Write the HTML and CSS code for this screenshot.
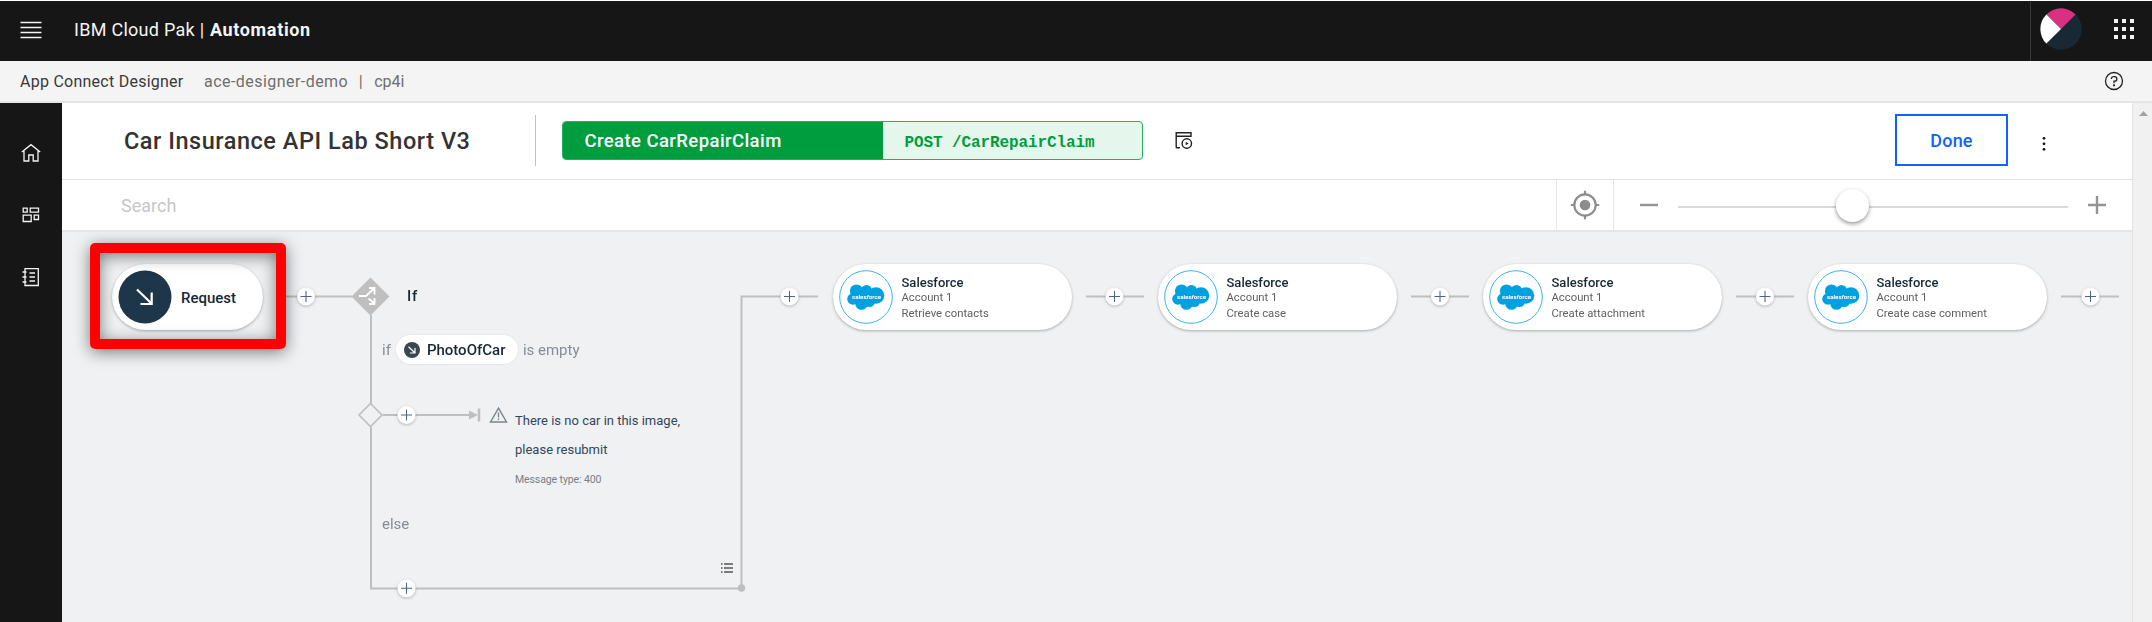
FILE: index.html
```html
<!DOCTYPE html>
<html lang="en">
<head>
<meta charset="utf-8">
<title>App Connect Designer</title>
<link rel="stylesheet" href="styles.css">
</head>
<body>
<svg class="defs" aria-hidden="true">
  <symbol id="plus" viewBox="0 0 24 24"><circle cx="12" cy="12" r="9" fill="#fff"/><path d="M12 6.500v11M6.500 12h11" stroke="#50658a" stroke-width="1.100"/></symbol>
  <symbol id="cloud" viewBox="0 0 54 54">
    <circle cx="27" cy="27" r="26.300" fill="#fff" stroke="#3bb3ea" stroke-width="1"/>
    <g fill="#00a1e0"><circle cx="17.500" cy="21" r="6.600"/><circle cx="27.500" cy="20.500" r="5.500"/><circle cx="37" cy="25.500" r="8.300"/><circle cx="14" cy="29" r="5.800"/><circle cx="22.500" cy="33.500" r="6.300"/><circle cx="30.500" cy="31.500" r="5.500"/><path d="M14 22h24v10H16z"/></g>
  </symbol>
</svg>
<header class="topbar">
  <svg class="menu" width="22" height="18" viewBox="0 0 22 18"><path d="M.5 1.500h21M.5 6.500h21M.5 11.500h21M.5 16.500h21" stroke="#f4f4f4" stroke-width="1.400"/></svg>
  <span class="brand">IBM Cloud Pak |</span><span class="brand-strong">Automation</span>
  <div class="user">
    <svg width="42" height="42" viewBox="0 0 42 42"><circle cx="21" cy="21" r="20.700" fill="#182935"/><path d="M21 21L6.400 6.400A20.700 20.700 0 0 1 35.600 6.400Z" fill="#da3080"/><path d="M21 21L6.400 6.400A20.700 20.700 0 0 0 6.400 35.600Z" fill="#fff"/></svg>
    <svg class="apps" width="20" height="20" viewBox="0 0 20 20"><path d="M0 2h4m4 0h4m4 0h4M0 10h4m4 0h4m4 0h4M0 18h4m4 0h4m4 0h4" stroke="#f4f4f4" stroke-width="4"/></svg>
  </div>
</header>
<div class="subbar">
  <span class="product">App Connect Designer</span><span class="instance">ace-designer-demo</span><span class="pipe">|</span><span class="ns">cp4i</span>
  <svg class="help" width="20" height="20" viewBox="0 0 20 20" fill="none" stroke="#222" stroke-width="1.300"><circle cx="10" cy="10" r="8.500"/><path d="M7.400 8V7.600A2 2 0 0 1 9.400 5.700h1.200a2 2 0 0 1 0 4.500H10v2"/><circle cx="10" cy="14.300" r=".5" fill="#222"/></svg>
</div>
<div class="body">
  <nav class="side">
    <svg width="20" height="20" viewBox="0 0 20 20" fill="none" stroke="#f4f4f4" stroke-width="1.300"><path d="M.8 9L10 1.700 19.200 9M3 7.500V18h4.800v-6h4.400v6H17V7.500"/></svg>
    <svg width="20" height="20" viewBox="0 0 20 20" fill="none" stroke="#f4f4f4" stroke-width="1.300"><path d="M2.200 3.200h4v4h-4zM9.200 3.200h8.300v4H9.200zM2.200 10.200h8v6.300h-8zM13.200 10.200h4.300v4.300h-4.300z"/></svg>
    <svg width="20" height="20" viewBox="0 0 20 20" fill="none" stroke="#f4f4f4" stroke-width="1.300"><path d="M4 1.700h13.300v16.800H4zM1.500 5h4M1.500 10h4M1.500 15h4M8.500 6h5.500M8.500 10h5.500M8.500 14h5.500"/></svg>
  </nav>
  <main class="main">
    <div class="titlebar">
      <h1 class="title">Car Insurance API Lab Short V3</h1>
      <div class="op"><span class="op-name">Create CarRepairClaim</span><code class="op-path">POST /CarRepairClaim</code></div>
      <svg class="run" width="18" height="19" viewBox="0 0 18 19" fill="none" stroke="#222" stroke-width="1.400"><path d="M5 16.800H2Q1.200 16.800 1.200 16V1.800H16V5.200H1.200"/><circle cx="11.800" cy="12.500" r="4.700"/><path d="M10.700 10.700v3.600l2.900-1.800z" fill="#222" stroke="none"/></svg>
      <button class="done">Done</button>
      <svg class="kebab" width="4" height="16" viewBox="0 0 4 16" fill="#161616"><circle cx="2" cy="2.300" r="1.400"/><circle cx="2" cy="7.800" r="1.400"/><circle cx="2" cy="13.300" r="1.400"/></svg>
    </div>
    <div class="searchbar">
      <span class="search">Search</span>
      <div class="locate"><svg width="30" height="30" viewBox="0 0 30 30" fill="none" stroke="#8d8d8d" stroke-width="2.200"><circle cx="15" cy="15" r="10.700"/><circle cx="15" cy="15" r="5.300" fill="#8d8d8d" stroke="none"/><path d="M15 .8v4M15 25.200v4M.8 15h4M25.200 15h4"/></svg></div>
      <div class="zoom">
        <svg width="18" height="18" viewBox="0 0 18 18"><path d="M0 9h18" stroke="#949494" stroke-width="2.400"/></svg>
        <div class="track"><div class="knob"></div></div>
        <svg width="18" height="18" viewBox="0 0 18 18"><path d="M0 9h18M9 0v18" stroke="#949494" stroke-width="2.400"/></svg>
      </div>
    </div>
    <div class="canvas">
      <svg class="wires" width="2070" height="390" viewBox="62 232 2070 390" fill="none" stroke="#bfbfbf" stroke-width="2">
        <path d="M286 296.500H352M371 315v89M371 427v161.500H741.500V296.500H818M383 415H470"/>
        <path d="M1086 296.500h58M1411 296.500h58M1736 296.500h58M2061 296.500h58"/>
        <path d="M469 410.500l9 4.500-9 4.500z" fill="#bfbfbf" stroke="none"/><path d="M479 408.500v13" stroke-width="2.500"/>
        <path d="M370.500 277.500l19 19-19 19-19-19z" fill="#bfbfbf" stroke="none"/>
        <path d="M359 296h7l8-7.500M368.500 298.500l6 5M369 288h5.500v6.500M369 304h5.500v-6" stroke="#fff" stroke-width="1.900"/>
        <path d="M370.500 403.500l11.500 11.500-11.500 11.500-11.500-11.500z" stroke-width="1.600"/>
        <circle cx="741.500" cy="588" r="3.700" fill="#bfbfbf" stroke="none"/>
        <path d="M498.500 408.200l8 13.800h-16z" stroke="#7b8488" stroke-width="1.400"/><path d="M498.500 412.500v5M498.500 418.500v1.500" stroke="#7b8488" stroke-width="1.300"/>
        <path d="M721 564h1.500M724 564h9M721 568h1.500M724 568h9M721 572h1.500M724 572h9" stroke="#555" stroke-width="1.700"/>
        <g class="adders" stroke="none">
          <use href="#plus" x="294" y="284.500" width="24" height="24"/><use href="#plus" x="394.500" y="403" width="24" height="24"/><use href="#plus" x="394.500" y="576.300" width="24" height="24"/>
          <use href="#plus" x="777.500" y="284.500" width="24" height="24"/><use href="#plus" x="1102.500" y="284.500" width="24" height="24"/><use href="#plus" x="1428" y="284.500" width="24" height="24"/><use href="#plus" x="1753" y="284.500" width="24" height="24"/><use href="#plus" x="2078.500" y="284.500" width="24" height="24"/>
        </g>
      </svg>
      <div class="node request">
        <svg width="54" height="54" viewBox="0 0 54 54"><circle cx="27" cy="27" r="26.500" fill="#1d3649"/><path d="M19 19.500l14.500 14M33.700 22.500V34H22.500" fill="none" stroke="#fff" stroke-width="2.200"/></svg>
        <span class="request-name">Request</span>
      </div>
      <div class="highlight"></div>
      <span class="label if-name">If</span>
      <div class="label cond"><span class="kw">if</span><span class="chip"><svg width="16" height="16" viewBox="0 0 16 16"><circle cx="8" cy="8" r="8" fill="#3a4750"/><path d="M4.500 4.800l6.300 6M11 6v5H6" fill="none" stroke="#fff" stroke-width="1.200"/></svg><b class="chip-name">PhotoOfCar</b></span><span class="test">is empty</span></div>
      <div class="label message"><p>There is no car in this image,<br>please resubmit</p><small>Message type: 400</small></div>
      <span class="label else">else</span>
      <div class="node step s1"><svg width="54" height="54" viewBox="0 0 54 54"><use href="#cloud"/><text x="27.500" y="28.500" text-anchor="middle" class="cloud-text">sales<tspan class="cloud-f">f</tspan>orce</text></svg><div class="info"><b>Salesforce</b><span>Account 1</span><em>Retrieve contacts</em></div></div>
      <div class="node step s2"><svg width="54" height="54" viewBox="0 0 54 54"><use href="#cloud"/><text x="27.500" y="28.500" text-anchor="middle" class="cloud-text">sales<tspan class="cloud-f">f</tspan>orce</text></svg><div class="info"><b>Salesforce</b><span>Account 1</span><em>Create case</em></div></div>
      <div class="node step s3"><svg width="54" height="54" viewBox="0 0 54 54"><use href="#cloud"/><text x="27.500" y="28.500" text-anchor="middle" class="cloud-text">sales<tspan class="cloud-f">f</tspan>orce</text></svg><div class="info"><b>Salesforce</b><span>Account 1</span><em>Create attachment</em></div></div>
      <div class="node step s4"><svg width="54" height="54" viewBox="0 0 54 54"><use href="#cloud"/><text x="27.500" y="28.500" text-anchor="middle" class="cloud-text">sales<tspan class="cloud-f">f</tspan>orce</text></svg><div class="info"><b>Salesforce</b><span>Account 1</span><em>Create case comment</em></div></div>
    </div>
  </main>
  <div class="scroll"><svg width="9" height="5" viewBox="0 0 9 5"><path d="M4.500 0L9 5H0z" fill="#a3a3a3"/></svg></div>
</div>
</body>
</html>
```
FILE: styles.css
```css
* { box-sizing: border-box; }
body { margin: 0; width: 2152px; height: 622px; overflow: hidden; display: flex; flex-direction: column; padding-top: 1px; background: #fff; font-family: Roboto, "Liberation Sans", sans-serif; font-size: 16px; color: #161616; }
svg { display: block; flex: none; }
.defs { position: absolute; width: 0; height: 0; }

.topbar { height: 60px; flex: none; display: flex; align-items: center; background: #161616; color: #f4f4f4; padding: 0 18px 3px 20px; font-size: 18px; white-space: pre; }
.menu { margin-right: 32px; }
.brand { letter-spacing: .28px; }
.brand-strong { font-weight: 700; margin-left: 5.5px; letter-spacing: .65px; }
.user { margin-left: auto; display: flex; align-items: center; height: 60px; margin-bottom: -3px; padding-bottom: 4px; padding-left: 9px; border-left: 1px solid #393939; }
.apps { margin-left: 32px; }

.subbar { height: 42px; flex: none; display: flex; align-items: center; background: #f4f4f4; border-bottom: 2px solid #e5e5e5; padding: 0 28px 0 20px; color: #6f6f6f; white-space: pre; }
.product { color: #393939; margin-right: 20.5px; letter-spacing: .25px; }
.instance { letter-spacing: .45px; }
.pipe { margin: 0 11.5px 0 10.700px; }
.help { margin-left: auto; }

.body { flex: 1; display: flex; min-height: 0; }
.side { width: 62px; flex: none; background: #161616; display: flex; flex-direction: column; align-items: center; padding-top: 40px; gap: 42px; }
.main { width: 2070px; flex: none; display: flex; flex-direction: column; }
.scroll { flex: 1; background: #f1f1f1; border-left: 1px solid #e3e3e3; padding: 8px 0 0 6px; }

.titlebar { height: 77px; flex: none; display: flex; align-items: center; background: #fff; border-bottom: 1px solid #e0e0e0; padding-bottom: 2px; }
.title { margin: 0 0 0 62px; width: 412px; height: 51px; line-height: 52px; border-right: 1px solid #bcc4c8; font-size: 23.5px; letter-spacing: .53px; font-weight: 500; color: #333; white-space: nowrap; }
.op { margin-left: 26px; width: 581px; height: 39px; display: flex; border: 1px solid #27ae60; border-radius: 4px; overflow: hidden; background: #e5f6ec; line-height: 38px; }
.op-name { width: 320px; padding-left: 21.5px; background: #009d3f; color: #fff; font-size: 18.5px; letter-spacing: .42px; font-weight: 500; }
.op-path { padding-left: 21.5px; font: bold 16px/43px "Liberation Mono", monospace; letter-spacing: -.1px; color: #009d3f; }
.run { margin-left: 32px; }
.done { margin-left: 702px; width: 113px; height: 52px; border: 2px solid #0f62fe; background: #fff; color: #0f62fe; font: 500 18px Roboto, sans-serif; letter-spacing: .2px; padding: 0; }
.kebab { margin-left: 34px; margin-top: 8px; }

.searchbar { height: 52px; flex: none; display: flex; background: #fff; border-bottom: 2px solid #e5e5e5; }
.search { width: 1494px; padding-left: 59px; line-height: 52px; font-size: 18px; color: #c6c6c6; }
.locate { width: 58px; border: solid #e5e5e5; border-width: 0 1px; display: flex; align-items: center; justify-content: center; }
.zoom { flex: 1; display: flex; align-items: center; padding-left: 26px; }
.track { width: 390px; height: 2px; margin: 3px 20px 0 20px; background: #d9d9d9; display: flex; align-items: center; justify-content: center; }
.knob { width: 33px; height: 33px; flex: none; border-radius: 50%; background: #fff; box-shadow: 0 2px 4px rgba(0,0,0,.4); margin: -3px 42px 0 0; }

.canvas { flex: 1; position: relative; background: #eff1f3; overflow: hidden; }
.wires { position: absolute; left: 0; top: 0; }
.adders { filter: drop-shadow(0 1px 1.5px rgba(0,0,0,.25)); }
.node { position: absolute; top: 32px; height: 66px; border-radius: 33px; background: #fff; display: flex; align-items: center; padding-left: 6px; box-shadow: 0 1px 3px rgba(0,0,0,.3); }
.request { left: 50px; width: 151px; }
.request-name { margin: 1px 0 0 9px; font-size: 15px; font-weight: 500; color: #152935; }
.highlight { position: absolute; left: 28px; top: 11px; width: 196px; height: 106px; border: 10px solid #f00; border-radius: 5px; box-shadow: 0 3px 16px rgba(0,0,0,.5), inset 0 3px 16px rgba(0,0,0,.5); }
.label { position: absolute; white-space: nowrap; color: #868d95; font-size: 15px; }
.if-name { left: 345px; top: 54px; line-height: 20px; font-weight: 500; letter-spacing: .7px; color: #152935; }
.cond { left: 320px; top: 103px; height: 29px; display: flex; align-items: center; }
.chip { width: 122px; height: 29px; margin: 0 5px; border-radius: 15px; background: #fff; display: flex; align-items: center; padding-left: 8px; box-shadow: 0 0 2px rgba(0,0,0,.12); }
.chip-name { margin-left: 7px; font-weight: 500; color: #152935; }
.message { left: 453px; top: 174px; color: #33475b; font-size: 13px; line-height: 29px; }
.message p { margin: 0; }
.message small { display: block; padding-top: 1px; font-size: 10.5px; letter-spacing: -.1px; color: #777f85; }
.else { left: 320px; top: 282px; line-height: 20px; }
.step { width: 239px; }
.s1 { left: 771px; }
.s2 { left: 1096px; }
.s3 { left: 1421px; }
.s4 { left: 1746px; }
.info { margin-left: 8.5px; padding-top: 1px; display: flex; flex-direction: column; align-items: flex-start; font-size: 11.3px; line-height: 15px; color: #5f5f5f; }
.info b { font-size: 13px; font-weight: 500; color: #152935; }
.info em { font-style: normal; margin-top: 1px; }
.cloud-text { font: bold 6.2px Roboto, sans-serif; fill: #fff; }
.cloud-f { font-style: italic; }
```
